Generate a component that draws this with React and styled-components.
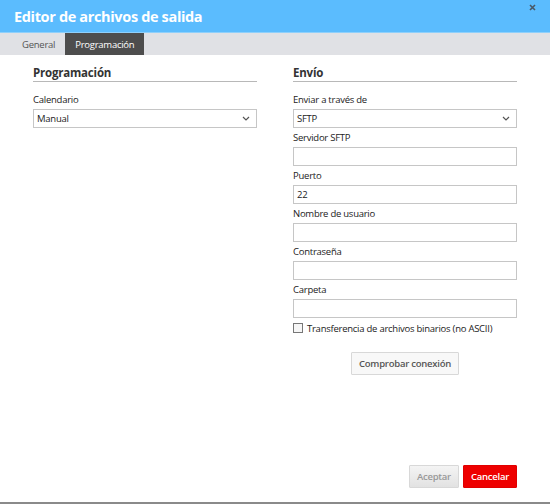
import React from 'react';
import styled, { createGlobalStyle } from 'styled-components';

const GlobalStyle = createGlobalStyle`
    html, body { margin: 0; padding: 0; background: #fff; }
    body { font-family: "Open Sans", "Liberation Sans", sans-serif; }
`;

function Chevron() {
    return (
        <svg width='8' height='5' viewBox='0 0 8 5'>
            <path d='M1 1 L4 4 L7 1' fill='none' stroke='#555' strokeWidth='1.2' />
        </svg>
    );
}

function CloseIcon() {
    return (
        <svg width='7' height='7' viewBox='0 0 7 7'>
            <path d='M1 1 L6 6 M6 1 L1 6' stroke='#4a5866' strokeWidth='1.6' />
        </svg>
    );
}

function Field({ label, value, select }) {
    return (
        <FieldWrap>
            <Label>{label}</Label>
            <Box>
                <span>{value}</span>
                {select && <Chevron />}
            </Box>
        </FieldWrap>
    );
}

export default function App() {
    return (
        <Window>
            <GlobalStyle />
            <TitleBar>
                <Title>Editor de archivos de salida</Title>
                <Close><CloseIcon /></Close>
            </TitleBar>
            <Tabs>
                <Tab>General</Tab>
                <Tab active>Programación</Tab>
            </Tabs>
            <Body>
                <Column>
                    <Heading>Programación</Heading>
                    <Field label='Calendario' value='Manual' select />
                </Column>
                <Column>
                    <Heading>Envío</Heading>
                    <Field label='Enviar a través de' value='SFTP' select />
                    <Field label='Servidor SFTP' />
                    <Field label='Puerto' value='22' />
                    <Field label='Nombre de usuario' />
                    <Field label='Contraseña' />
                    <Field label='Carpeta' />
                    <Check>
                        <CheckBox />
                        <span>Transferencia de archivos binarios (no ASCII)</span>
                    </Check>
                    <Center>
                        <Button>Comprobar conexión</Button>
                    </Center>
                </Column>
            </Body>
            <Footer>
                <Button disabled>Aceptar</Button>
                <Button danger>Cancelar</Button>
            </Footer>
        </Window>
    );
}

const Window = styled.div`
    width: 550px;
    height: 504px;
    display: flex;
    flex-direction: column;
    box-sizing: border-box;
    border-bottom: 2px solid #8a8a8a;
    color: #222;
    font-size: 9.5px;
    letter-spacing: -0.25px;
`;

const TitleBar = styled.div`
    height: 32px;
    background: #5bbcfe;
    border-bottom: 1px solid #8fd0fb;
    display: flex;
    align-items: center;
    padding: 0 14px;
    position: relative;
`;

const Title = styled.div`
    color: #fff;
    font-size: 14.5px;
    font-weight: 700;
    letter-spacing: -0.35px;
`;

const Close = styled.div`
    position: absolute;
    top: 4px;
    right: 14px;
    display: flex;
`;

const Tabs = styled.div`
    height: 22px;
    background: #e0e1e5;
    display: flex;
    padding-left: 12px;
`;

const Tab = styled.div`
    display: flex;
    align-items: center;
    padding: 0 10px;
    color: ${p => (p.active ? '#fff' : '#555')};
    background: ${p => (p.active ? '#4d4d4d' : 'transparent')};
`;

const Body = styled.div`
    flex: 1;
    display: grid;
    grid-template-columns: 224px 224px;
    column-gap: 36px;
    padding: 11px 33px 0;
    align-items: start;
`;

const Column = styled.div`
    display: flex;
    flex-direction: column;
`;

const Heading = styled.div`
    font-size: 11.5px;
    line-height: 14px;
    font-weight: 700;
    letter-spacing: -0.2px;
    color: #333;
    padding-bottom: 1px;
    border-bottom: 1px solid #b8b8b8;
    margin-bottom: 11px;
`;

const FieldWrap = styled.div`
    display: flex;
    flex-direction: column;
    margin-bottom: 3px;
`;

const Label = styled.div`
    height: 14px;
    line-height: 14px;
    margin-bottom: 2px;
`;

const Box = styled.div`
    height: 17px;
    border: 1px solid #c6c6c6;
    display: flex;
    align-items: center;
    justify-content: space-between;
    padding: 0 6px 0 3px;
`;

const Check = styled.label`
    display: flex;
    align-items: center;
    gap: 4px;
    height: 14px;
`;

const CheckBox = styled.span`
    width: 8px;
    height: 8px;
    border: 1px solid #777;
    background: #f6f6f6;
`;

const Center = styled.div`
    display: flex;
    justify-content: center;
    margin-top: 17px;
`;

const Button = styled.button`
    height: 23px;
    padding: 0 7px;
    font-family: inherit;
    font-size: 9.5px;
    letter-spacing: -0.25px;
    font-weight: 600;
    border: 1px solid ${p => (p.danger ? '#e00000' : '#d8d8d8')};
    background: ${p => (p.danger ? '#ee0000' : p.disabled ? 'linear-gradient(#f4f4f4, #e2e2e2)' : '#f8f8f8')};
    color: ${p => (p.danger ? '#fff' : p.disabled ? '#999' : '#555')};
    border-radius: 1px;
`;

const Footer = styled.div`
    display: flex;
    justify-content: flex-end;
    gap: 4px;
    padding: 0 33px 14px 0;
`;
